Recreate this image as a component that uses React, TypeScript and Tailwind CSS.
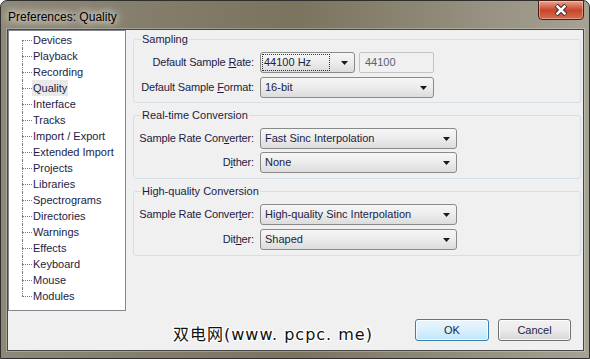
import type { ReactNode } from "react";

const treeItems = [
  "Devices",
  "Playback",
  "Recording",
  "Quality",
  "Interface",
  "Tracks",
  "Import / Export",
  "Extended Import",
  "Projects",
  "Libraries",
  "Spectrograms",
  "Directories",
  "Warnings",
  "Effects",
  "Keyboard",
  "Mouse",
  "Modules",
];

function Arrow() {
  return (
    <svg width="7" height="4" viewBox="0 0 7 4" className="shrink-0">
      <path d="M0 0h7L3.5 4z" fill="#1a1a1a" />
    </svg>
  );
}

function Combo({ value, width, focused }: { value: string; width: string; focused?: boolean }) {
  return (
    <div
      className={`${width} h-[21px] flex items-center rounded-[3px] border border-[#8a8a8a] bg-gradient-to-b from-[#f6f6f6] via-[#ececec] to-[#dcdcdc] pl-[2px] pr-[6px]`}
    >
      <div className="flex-1 flex items-center h-[15px]">
        <span
          className={
            focused
              ? "h-full flex items-center pl-[1px] pr-[18px] outline outline-1 outline-dotted outline-[#333]"
              : "pl-[2px]"
          }
        >
          {value}
        </span>
      </div>
      <Arrow />
    </div>
  );
}

function Row({ label, children }: { label: ReactNode; children: ReactNode }) {
  return (
    <div className="flex items-center h-[21px]">
      <div className="w-[125px] text-right pr-[6px] whitespace-nowrap tracking-[-0.15px]">{label}</div>
      {children}
    </div>
  );
}

function Group({
  title,
  children,
  gap,
  pb,
}: {
  title: string;
  children: ReactNode;
  gap: string;
  pb: string;
}) {
  return (
    <fieldset className={`border border-[#d5dfe5] rounded-[3px] pl-[1px] ${pb}`}>
      <legend className="ml-[6px] px-[1px] leading-[14px]">{title}</legend>
      <div className={`flex flex-col ${gap} mt-[6px]`}>{children}</div>
    </fieldset>
  );
}

export default function App() {
  return (
    <div
      className="relative w-[590px] h-[359px] flex flex-col rounded-t-[7px] border border-[#2e2e2e] bg-gradient-to-r from-[#8e8878] via-[#7a735e] to-[#a6a294] text-[11px] text-[#1c1c44]"
      style={{ fontFamily: '"Liberation Sans", Arial, sans-serif' }}
    >
      {/* title bar */}
      <div className="h-[28px] flex items-start shrink-0">
        <div className="pl-[7px] pt-[7px] text-[12px] text-black [text-shadow:0_0_6px_#e8e4d8,0_0_10px_#e8e4d8,0_0_14px_#ddd8ca]">
          Preferences: Quality
        </div>
        <div className="ml-auto mr-[5px] -mt-[1px] w-[46px] h-[20px] flex items-center justify-center rounded-b-[4px] border border-[#4a2118] bg-gradient-to-b from-[#e9a48e] via-[#c8452b] to-[#d96a4c] shadow-[inset_0_0_0_1px_rgba(255,255,255,0.35)]">
          <svg width="14" height="12" viewBox="0 0 14 12">
            <path
              d="M2.2 1.2L11.8 10.8M11.8 1.2L2.2 10.8"
              stroke="#3a2a2a"
              strokeWidth="4.4"
              fill="none"
            />
            <path
              d="M2.6 1.6L11.4 10.4M11.4 1.6L2.6 10.4"
              stroke="#ffffff"
              strokeWidth="2.6"
              fill="none"
            />
          </svg>
        </div>
      </div>

      {/* client area */}
      <div className="ml-[6px] mr-[5px] mb-[7px] flex-1 flex flex-col bg-[#f0f0f0] border border-[#474747] shadow-[0_0_0_1px_rgba(255,255,255,0.25)]">
        <div className="flex">
          {/* tree */}
          <div className="w-[118px] h-[281px] bg-white border border-[#828790] pt-[1px] pl-[13px]">
            {treeItems.map((item, i) => (
              <div key={item} className="flex items-center h-[16px]">
                <div className="w-[10px] h-full flex flex-col">
                  <div
                    className={
                      i > 0 ? "h-[8px] border-l border-dotted border-[#7a7a7a]" : "h-[8px]"
                    }
                  />
                  <div
                    className={
                      i < treeItems.length - 1
                        ? "h-[8px] border-l border-t border-dotted border-[#7a7a7a]"
                        : "h-[8px] border-t border-dotted border-[#7a7a7a]"
                    }
                  />
                </div>
                <span
                  className={
                    item === "Quality"
                      ? "px-[1px] h-[16px] leading-[16px] bg-[#e8e8e8]"
                      : "px-[1px] leading-[16px]"
                  }
                >
                  {item}
                </span>
              </div>
            ))}
          </div>

          {/* settings */}
          <div className="flex-1 ml-[7px] mr-[2px] mt-[2px] flex flex-col">
            <Group title="Sampling" gap="gap-[4px]" pb="pb-[4px]">
              <Row
                label={
                  <>
                    Default Sample <span className="underline">R</span>ate:
                  </>
                }
              >
                <Combo value="44100 Hz" width="w-[95px]" focused />
                <div className="ml-[4px] w-[75px] h-[21px] flex items-center pl-[5px] rounded-[2px] border border-[#c4c4c4] text-[#5b6170]">
                  44100
                </div>
              </Row>
              <Row
                label={
                  <>
                    Default Sample <span className="underline">F</span>ormat:
                  </>
                }
              >
                <Combo value="16-bit" width="w-[174px]" />
              </Row>
            </Group>

            <div className="h-[5px]" />
            <Group title="Real-time Conversion" gap="gap-[3px]" pb="pb-[5px]">
              <Row
                label={
                  <>
                    Sample Rate Con<span className="underline">v</span>erter:
                  </>
                }
              >
                <Combo value="Fast Sinc Interpolation" width="w-[197px]" />
              </Row>
              <Row
                label={
                  <>
                    D<span className="underline">i</span>ther:
                  </>
                }
              >
                <Combo value="None" width="w-[197px]" />
              </Row>
            </Group>

            <div className="h-[5px]" />
            <Group title="High-quality Conversion" gap="gap-[4px]" pb="pb-[5px]">
              <Row
                label={
                  <>
                    Sample Rate Conver<span className="underline">t</span>er:
                  </>
                }
              >
                <Combo value="High-quality Sinc Interpolation" width="w-[197px]" />
              </Row>
              <Row
                label={
                  <>
                    Dit<span className="underline">h</span>er:
                  </>
                }
              >
                <Combo value="Shaped" width="w-[197px]" />
              </Row>
            </Group>
          </div>
        </div>

        {/* buttons */}
        <div className="mt-[8px] flex justify-end gap-[9px] pr-[12px]">
          <button className="w-[74px] h-[22px] rounded-[3px] border border-[#3c7fb1] bg-gradient-to-b from-[#eaf6fd] via-[#d9f0fc] to-[#bee6fd] shadow-[inset_0_0_0_1px_rgba(255,255,255,0.8)] text-[#1c1c44]">
            OK
          </button>
          <button className="w-[73px] h-[22px] rounded-[3px] border border-[#707070] bg-gradient-to-b from-[#f2f2f2] via-[#ebebeb] to-[#d6d6d6] shadow-[inset_0_0_0_1px_rgba(255,255,255,0.8)] text-[#1c1c44]">
            Cancel
          </button>
        </div>
      </div>

      {/* watermark */}
      <div
        className="absolute left-[172px] top-[323px] text-[16px] leading-[22px] tracking-[1px] text-[#111] whitespace-nowrap [text-shadow:1px_0_0_#fff,-1px_0_0_#fff,0_1px_0_#fff,0_-1px_0_#fff,1px_1px_0_#fff,-1px_-1px_0_#fff,1px_-1px_0_#fff,-1px_1px_0_#fff]"
        style={{ fontFamily: '"DejaVu Sans", "Noto Sans CJK SC", sans-serif' }}
      >
        双电网(www. pcpc. me)
      </div>
    </div>
  );
}
